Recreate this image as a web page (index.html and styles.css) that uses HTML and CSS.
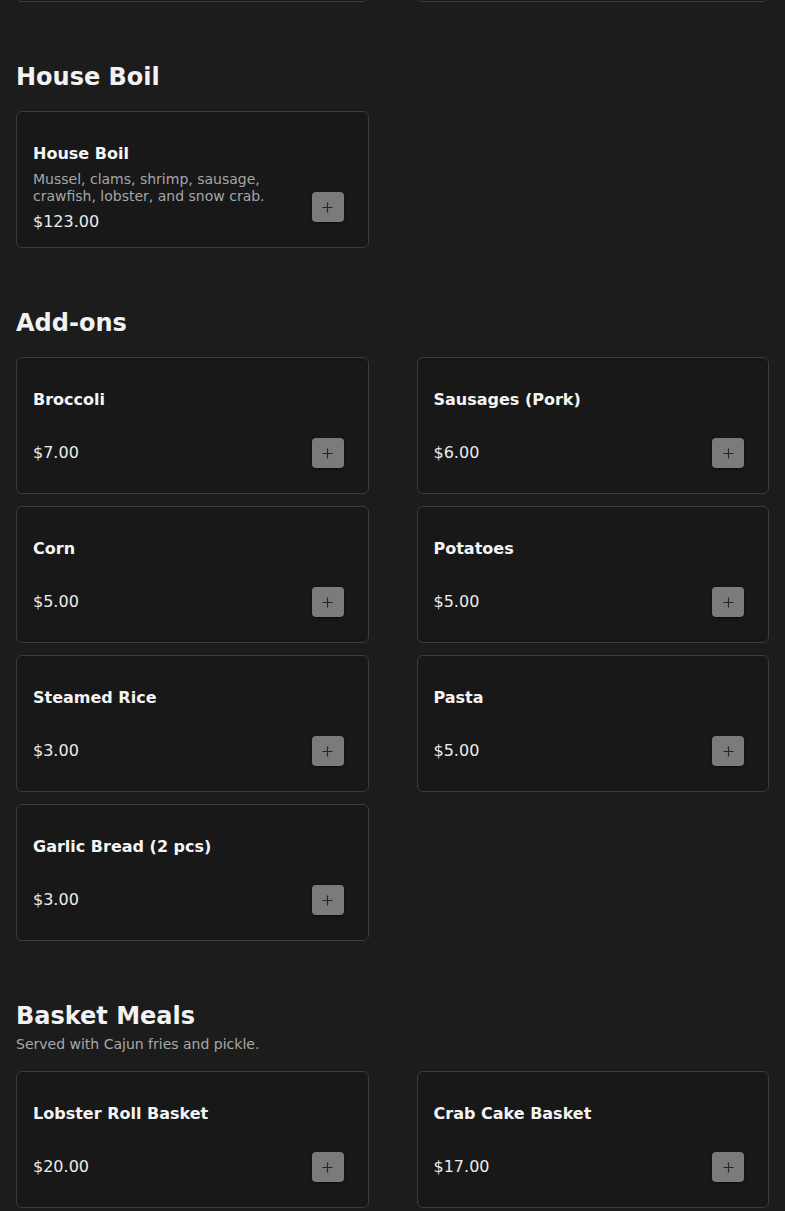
FILE: index.html
```html
<!DOCTYPE html>
<html lang="en">
<head>
<meta charset="utf-8">
<title>Menu</title>
<link rel="stylesheet" href="styles.css">
</head>
<body>
<main class="menu">
  <section class="section section-prev" aria-hidden="true">
    <div class="grid">
      <div class="card"></div>
      <div class="card"></div>
    </div>
  </section>

  <section class="section">
    <h2 class="section-title">House Boil</h2>
    <div class="grid">
      <div class="card">
        <div class="info">
          <div class="name">House Boil</div>
          <div class="desc">Mussel, clams, shrimp, sausage, crawfish, lobster, and snow crab.</div>
          <div class="price">$123.00</div>
        </div>
        <div class="action"><button class="add" aria-label="Add"><svg viewBox="0 0 12 12" width="12" height="12"><path d="M6 0.5v11M0.5 6h11"/></svg></button></div>
      </div>
    </div>
  </section>

  <section class="section">
    <h2 class="section-title">Add-ons</h2>
    <div class="grid">
      <div class="card"><div class="info"><div class="name">Broccoli</div><div class="price">$7.00</div></div><div class="action"><button class="add" aria-label="Add"><svg viewBox="0 0 12 12" width="12" height="12"><path d="M6 0.5v11M0.5 6h11"/></svg></button></div></div>
      <div class="card"><div class="info"><div class="name">Sausages (Pork)</div><div class="price">$6.00</div></div><div class="action"><button class="add" aria-label="Add"><svg viewBox="0 0 12 12" width="12" height="12"><path d="M6 0.5v11M0.5 6h11"/></svg></button></div></div>
      <div class="card"><div class="info"><div class="name">Corn</div><div class="price">$5.00</div></div><div class="action"><button class="add" aria-label="Add"><svg viewBox="0 0 12 12" width="12" height="12"><path d="M6 0.5v11M0.5 6h11"/></svg></button></div></div>
      <div class="card"><div class="info"><div class="name">Potatoes</div><div class="price">$5.00</div></div><div class="action"><button class="add" aria-label="Add"><svg viewBox="0 0 12 12" width="12" height="12"><path d="M6 0.5v11M0.5 6h11"/></svg></button></div></div>
      <div class="card"><div class="info"><div class="name">Steamed Rice</div><div class="price">$3.00</div></div><div class="action"><button class="add" aria-label="Add"><svg viewBox="0 0 12 12" width="12" height="12"><path d="M6 0.5v11M0.5 6h11"/></svg></button></div></div>
      <div class="card"><div class="info"><div class="name">Pasta</div><div class="price">$5.00</div></div><div class="action"><button class="add" aria-label="Add"><svg viewBox="0 0 12 12" width="12" height="12"><path d="M6 0.5v11M0.5 6h11"/></svg></button></div></div>
      <div class="card"><div class="info"><div class="name">Garlic Bread (2 pcs)</div><div class="price">$3.00</div></div><div class="action"><button class="add" aria-label="Add"><svg viewBox="0 0 12 12" width="12" height="12"><path d="M6 0.5v11M0.5 6h11"/></svg></button></div></div>
    </div>
  </section>

  <section class="section">
    <h2 class="section-title with-desc">Basket Meals</h2>
    <p class="section-desc">Served with Cajun fries and pickle.</p>
    <div class="grid">
      <div class="card"><div class="info"><div class="name">Lobster Roll Basket</div><div class="price">$20.00</div></div><div class="action"><button class="add" aria-label="Add"><svg viewBox="0 0 12 12" width="12" height="12"><path d="M6 0.5v11M0.5 6h11"/></svg></button></div></div>
      <div class="card"><div class="info"><div class="name">Crab Cake Basket</div><div class="price">$17.00</div></div><div class="action"><button class="add" aria-label="Add"><svg viewBox="0 0 12 12" width="12" height="12"><path d="M6 0.5v11M0.5 6h11"/></svg></button></div></div>
    </div>
  </section>
</main>
</body>
</html>
```
FILE: styles.css
```css
html, body {
  margin: 0;
  padding: 0;
  background: #1c1c1c;
}

body {
  font-family: "DejaVu Sans", "Noto Sans", sans-serif;
  color: #f2f2f2;
  overflow: hidden;
}

.menu {
  padding: 0 16px;
  margin-top: -135px;
}

.section + .section {
  margin-top: 61px;
}

.section-title {
  margin: 0 0 20px;
  font-size: 24px;
  line-height: 28px;
  font-weight: 700;
  color: #f2f2f2;
}

.section-title.with-desc {
  margin-bottom: 6px;
}

.section-desc {
  margin: 0 0 18px;
  font-size: 14px;
  line-height: 17px;
  color: #a8a8a8;
}

.grid {
  display: grid;
  grid-template-columns: 1fr 1fr;
  column-gap: 48px;
  row-gap: 12px;
}

.card {
  box-sizing: border-box;
  height: 137px;
  display: flex;
  padding: 32px 16px 31px;
  background: #181818;
  border: 1px solid #3c3c3c;
  border-radius: 6px;
}

.info {
  flex: 1;
  min-width: 0;
  display: flex;
  flex-direction: column;
}

.name {
  font-size: 16px;
  line-height: 19px;
  font-weight: 700;
  color: #f4f4f4;
  margin-bottom: 8px;
}

.desc {
  font-size: 14px;
  line-height: 17px;
  color: #a6a6a6;
  margin-bottom: 7px;
  max-width: 245px;
}

.price {
  margin-top: auto;
  font-size: 16px;
  line-height: 19px;
  color: #ececec;
}

.action {
  width: 48px;
  flex: none;
  display: flex;
  justify-content: center;
  align-items: flex-start;
}

.add {
  margin-top: 48px;
  width: 32px;
  height: 30px;
  padding: 0;
  border: none;
  border-radius: 4px;
  background: #7b7b7b;
  box-shadow: 0 1px 3px rgba(0, 0, 0, 0.55);
  display: flex;
  align-items: center;
  justify-content: center;
}

.add svg {
  display: block;
  width: 11px;
  height: 11px;
}

.add svg path {
  stroke: #262626;
  stroke-width: 1.3;
  fill: none;
}
```
